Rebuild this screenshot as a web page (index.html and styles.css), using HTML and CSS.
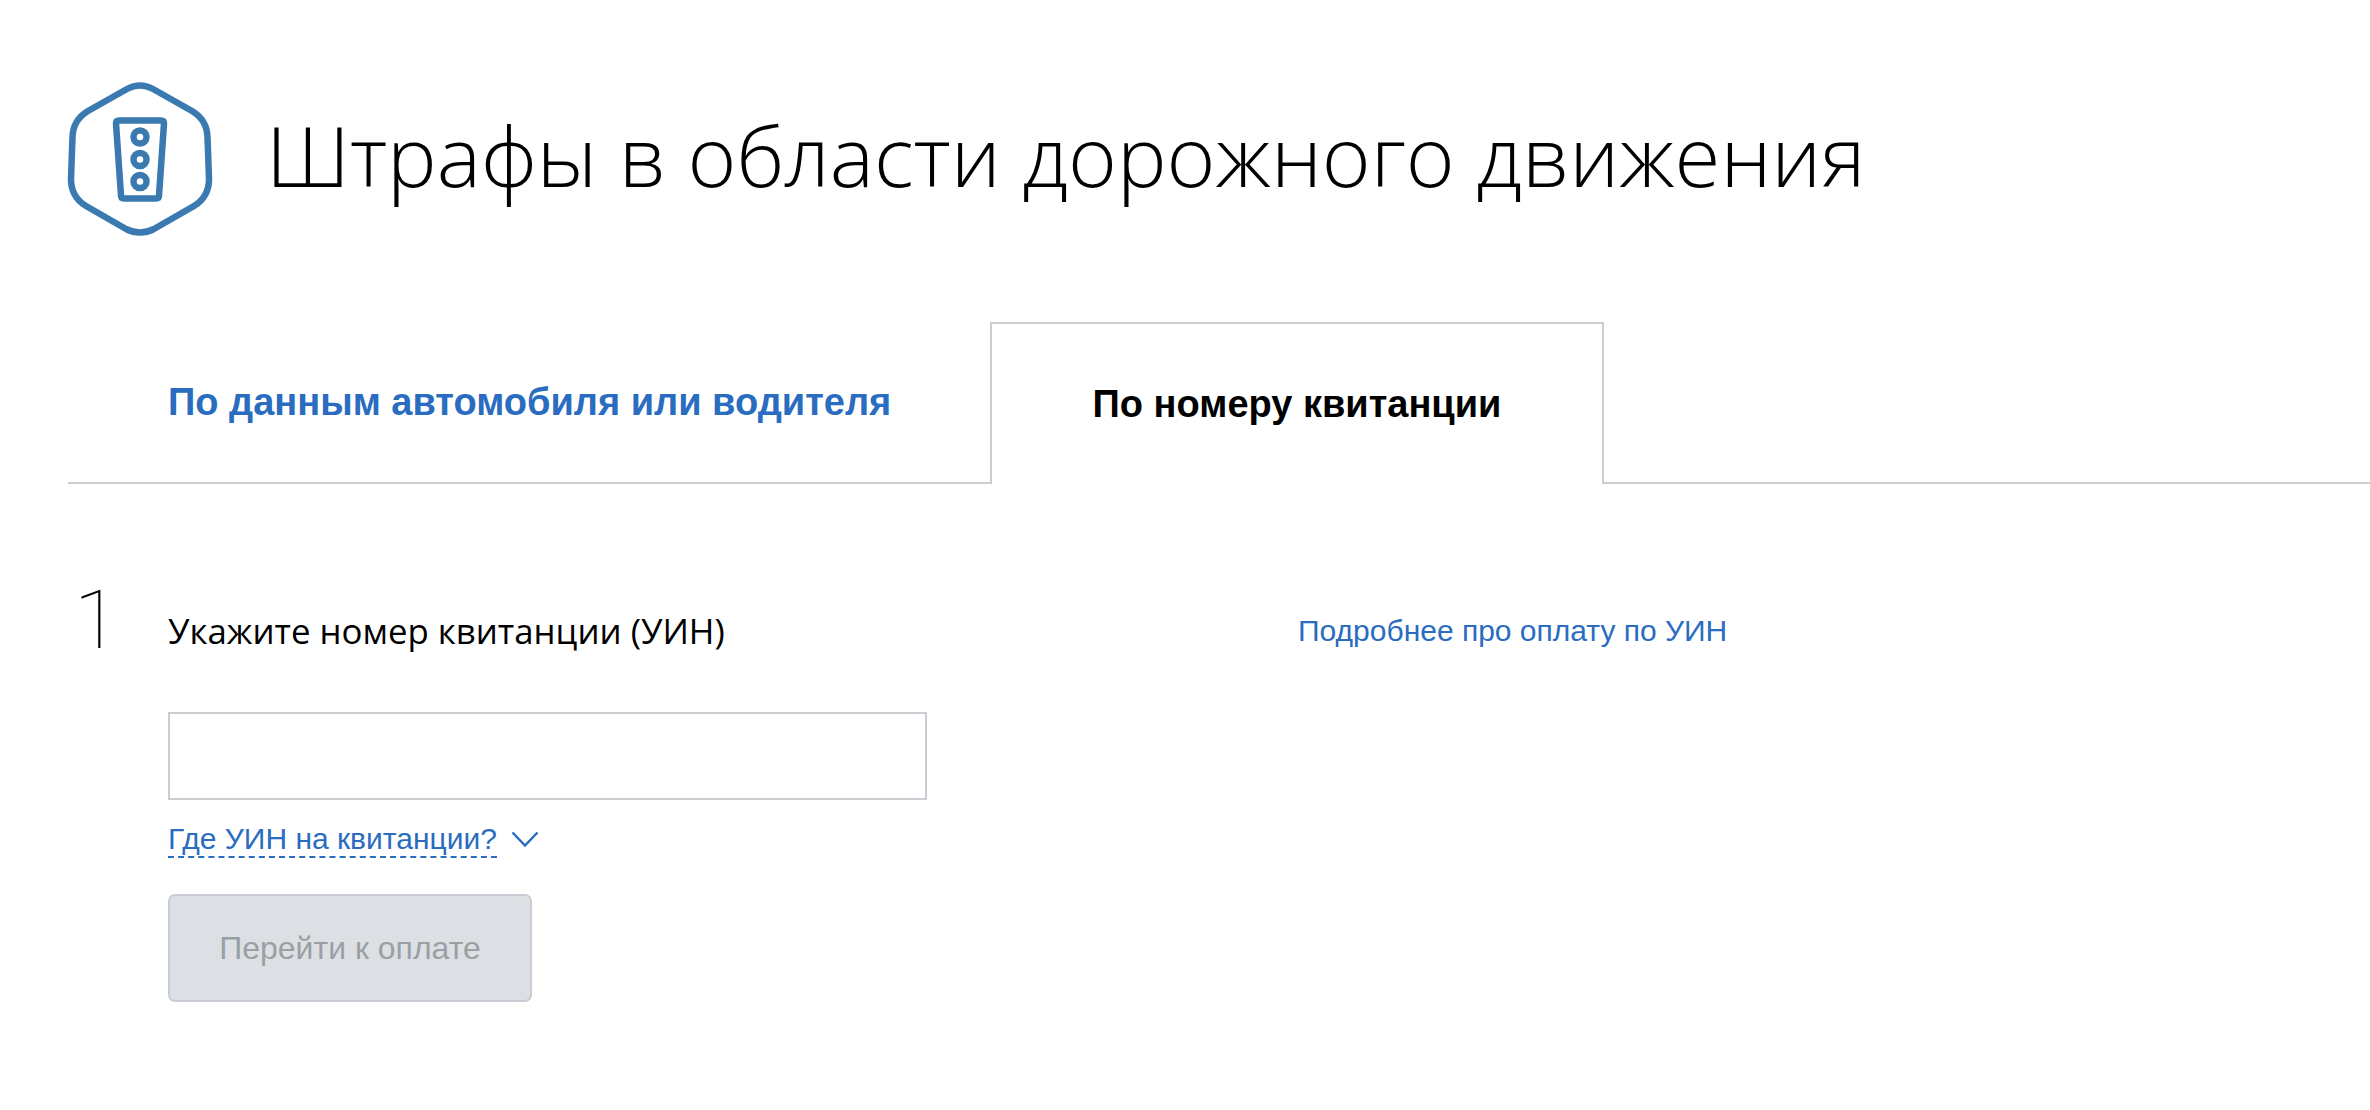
FILE: index.html
```html
<!DOCTYPE html>
<html lang="ru">
<head>
<meta charset="utf-8">
<title>Штрафы в области дорожного движения</title>
<link rel="stylesheet" href="styles.css">
</head>
<body>
<header class="page-head">
  <svg class="head-icon" viewBox="0 0 146 156" aria-hidden="true">
    <path class="stroke" d="M60 8 Q73 1 86 8 L125 30 Q140 39 140.500 56 L142 98 Q142 116 127 125 L87 148 Q73 155 59 148 L19 125 Q4 116 4 98 L5.500 56 Q6 39 21 30 Z"/>
    <path class="stroke" d="M52 39.500 H94 Q97 39.500 97 42.500 L92 114.500 Q92 117.500 89 117.500 H57 Q54 117.500 54 114.500 L49 42.500 Q49 39.500 52 39.500 Z"/>
    <circle class="stroke" cx="73" cy="56" r="6.500"/>
    <circle class="stroke" cx="73" cy="78.500" r="6.500"/>
    <circle class="stroke" cx="73" cy="100.500" r="6.500"/>
  </svg>
  <h1 class="page-title">Штрафы в области дорожного движения</h1>
</header>

<nav class="tabs">
  <a class="tab">По данным автомобиля или водителя</a>
  <a class="tab tab-active">По номеру квитанции</a>
</nav>

<main class="step">
  <div class="step-num">1</div>
  <div class="step-body">
    <div class="step-top">
      <h2 class="step-title">Укажите номер квитанции (УИН)</h2>
      <a class="more-link">Подробнее про оплату по УИН</a>
    </div>
    <input class="uin-input" type="text">
    <div class="hint">
      <a class="hint-link">Где УИН на квитанции?</a>
      <svg class="chevron" viewBox="0 0 28 17" aria-hidden="true"><path d="M1.500 1.500 L14 14.500 L26.500 1.500"/></svg>
    </div>
    <button class="pay-btn" type="button" disabled>Перейти к оплате</button>
  </div>
</main>
</body>
</html>
```
FILE: styles.css
```css
* { box-sizing: border-box; }
html, body { margin: 0; padding: 0; background: #fff; }
body { height: 1110px; overflow: hidden; font-family: "Liberation Sans", Arial, sans-serif; color: #000; }

.page-head { display: flex; align-items: center; height: 322px; padding: 0 0 5px 67px; }
.head-icon { width: 146px; height: 156px; flex: none; margin-right: 53px; }
.stroke { fill: none; stroke: #3a7ab1; stroke-width: 6.500; }
.page-title { margin: 0 0 7px; font-family: "Open Sans", sans-serif; font-weight: 300; font-size: 83.400px; line-height: 100px; color: #000; white-space: nowrap; }

.tabs { display: flex; height: 162px; margin-left: 68px; border-bottom: 2px solid #c9ced3; }
.tab { display: flex; align-items: center; font-weight: 700; font-size: 38px; color: #2a6cbf; width: 922px; padding: 0 0 0 100px; }
.tab-active { width: 614px; height: 162px; padding: 0; justify-content: center; color: #000; background: #fff; border: 2px solid #c9ced3; border-bottom: 0; }

.step { display: flex; padding: 104px 0 0 74px; }
.step-num { width: 94px; flex: none; font-family: Roboto, sans-serif; font-weight: 100; font-size: 82px; line-height: 82px; margin-top: -9px; }
.step-top { display: flex; align-items: center; height: 46px; margin-top: 20px; }
.step-title { width: 1130px; margin: -2px 0 0; font-family: "Open Sans", sans-serif; font-weight: 400; font-size: 34.800px; }
.more-link { font-size: 30px; color: #2a6cbf; }
.uin-input { display: block; width: 759px; height: 88px; margin-top: 58px; border: 2px solid #c9ced3; background: #fff; border-radius: 0; }
.hint { display: flex; align-items: center; margin-top: 21px; height: 37px; }
.hint-link { font-size: 30px; line-height: 34px; color: #2a6cbf; border-bottom: 2px dashed #2a6cbf; }
.chevron { width: 28px; height: 17px; margin-left: 14px; }
.chevron path { fill: none; stroke: #2a6cbf; stroke-width: 2.500; }
.pay-btn { display: block; width: 364px; height: 108px; margin-top: 36px; padding: 0; background: #dce0e4; border: 2px solid #c7cdd2; border-radius: 7px; font-family: "Liberation Sans", Arial, sans-serif; font-size: 32px; color: #9a9fa3; }
```
